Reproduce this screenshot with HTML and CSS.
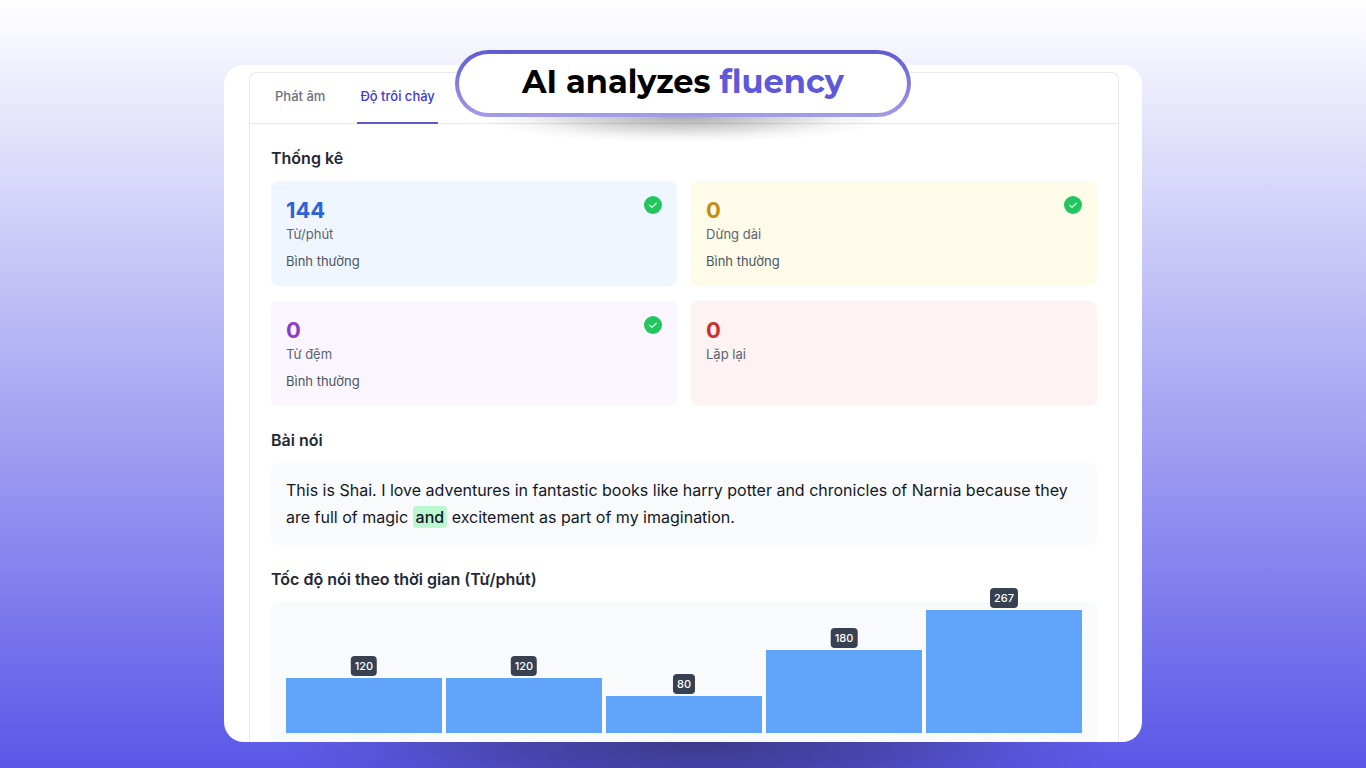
FILE: index.html
```html
<!DOCTYPE html>
<html lang="vi">
<head>
    <meta charset="UTF-8" />
    <meta name="viewport" content="width=device-width, initial-scale=1.0" />
    <title>AI analyzes fluency</title>
    <link rel="stylesheet" href="styles.css">
</head>
<body>
    <main class="card">
        <h1 class="badge">AI analyzes <span>fluency</span></h1>
        <div class="panel">
            <nav class="tabs">
                <button class="tab" type="button">Phát âm</button>
                <button class="tab tab--active" type="button">Độ trôi chảy</button>
            </nav>
            <div class="content">
                <section>
                    <h2>Thống kê</h2>
                    <div class="stats">
                        <div class="stat stat--blue">
                            <div>
                                <p class="stat-value">144</p>
                                <p class="stat-label">Từ/phút</p>
                                <p class="stat-status">Bình thường</p>
                            </div>
                            <svg class="check" viewBox="0 0 18 18"><circle cx="9" cy="9" r="9" /><path d="M5.8 9.3l2.2 2.1 4.3-4.2" /></svg>
                        </div>
                        <div class="stat stat--yellow">
                            <div>
                                <p class="stat-value">0</p>
                                <p class="stat-label">Dừng dài</p>
                                <p class="stat-status">Bình thường</p>
                            </div>
                            <svg class="check" viewBox="0 0 18 18"><circle cx="9" cy="9" r="9" /><path d="M5.8 9.3l2.2 2.1 4.3-4.2" /></svg>
                        </div>
                        <div class="stat stat--purple">
                            <div>
                                <p class="stat-value">0</p>
                                <p class="stat-label">Từ đệm</p>
                                <p class="stat-status">Bình thường</p>
                            </div>
                            <svg class="check" viewBox="0 0 18 18"><circle cx="9" cy="9" r="9" /><path d="M5.8 9.3l2.2 2.1 4.3-4.2" /></svg>
                        </div>
                        <div class="stat stat--red">
                            <div>
                                <p class="stat-value">0</p>
                                <p class="stat-label">Lặp lại</p>
                            </div>
                        </div>
                    </div>
                </section>
                <section>
                    <h2>Bài nói</h2>
                    <p class="speech">This is Shai. I love adventures in fantastic books like harry potter and chronicles of Narnia because they are full of magic <mark>and</mark> excitement as part of my imagination.</p>
                </section>
                <section>
                    <h2>Tốc độ nói theo thời gian (Từ/phút)</h2>
                    <div class="chart">
                        <div class="bar" style="height: 45%"><span>120</span></div>
                        <div class="bar" style="height: 45%"><span>120</span></div>
                        <div class="bar" style="height: 30%"><span>80</span></div>
                        <div class="bar" style="height: 67.4%"><span>180</span></div>
                        <div class="bar" style="height: 100%"><span>267</span></div>
                    </div>
                </section>
            </div>
        </div>
    </main>
</body>
</html>
```
FILE: styles.css
```css
* {
    box-sizing: border-box;
}
html, body {
    margin: 0;
    padding: 0;
}
body {
    min-height: 100vh;
    padding: 65px 24px 26px;
    overflow: hidden;
    background: linear-gradient(#ffffff, #5a57e8);
    font-family: 'Inter', sans-serif;
    color: #111827;
}
h2, p {
    margin: 0;
}
.card {
    position: relative;
    max-width: 918px;
    margin: 0 auto;
    padding: 7px 23px 0 25px;
    border-radius: 20px;
    background-color: #fff;
}
/* soft oval shadow under the card */
.card::after {
    content: "";
    position: absolute;
    top: 100%;
    left: 6%;
    right: 3%;
    height: 72px;
    background: radial-gradient(ellipse 50% 100% at 50% 0, rgba(30, 30, 60, 0.55), rgba(30, 30, 60, 0.34) 45%, rgba(30, 30, 60, 0.1) 78%, transparent);
}
.badge {
    position: absolute;
    z-index: 1;
    top: -15px;
    left: 50%;
    transform: translateX(-50%);
    width: 456px;
    max-width: 100%;
    margin: 0;
    padding-bottom: 3px;
    border: 4px solid transparent;
    border-radius: 34px;
    background: linear-gradient(#fff, #fff) padding-box, linear-gradient(#5f5bd0, #a49de6) border-box;
    font-family: 'Montserrat', 'Inter', sans-serif;
    font-size: 32px;
    line-height: 56px;
    font-weight: 700;
    color: #000;
    text-align: center;
    white-space: nowrap;
}
.badge span {
    color: #5d59d8;
}
.badge::after {
    content: "";
    position: absolute;
    top: 63px;
    left: 16px;
    right: 16px;
    height: 26px;
    background: radial-gradient(ellipse 50% 100% at 50% 0, rgba(0, 0, 0, 0.32), rgba(0, 0, 0, 0.16) 45%, rgba(0, 0, 0, 0.04) 78%, transparent);
}
.panel {
    border: 1px solid #e9eaee;
    border-bottom: none;
    border-radius: 7px 7px 0 0;
}
.tabs {
    display: flex;
    gap: 28px;
    padding: 0 21px;
    border-bottom: 1px solid #e5e7eb;
}
.tab {
    margin-bottom: -1px;
    padding: 13px 4px 16px;
    border: none;
    border-bottom: 2px solid transparent;
    background: none;
    font-family: inherit;
    font-size: 13px;
    line-height: 20px;
    font-weight: 500;
    color: #6b7280;
    cursor: pointer;
}
.tab--active {
    padding-left: 3px;
    padding-right: 3px;
    color: #4338ca;
    border-color: #5f5ac6;
}
.content {
    display: flex;
    flex-direction: column;
    gap: 22px;
    padding: 22px 21px 0;
}
h2 {
    margin-bottom: 11px;
    font-size: 16px;
    line-height: 24px;
    font-weight: 600;
    color: #1f2937;
}
.stats {
    display: grid;
    grid-template-columns: 1fr 1fr;
    gap: 15px 14px;
}
.stat {
    display: flex;
    justify-content: space-between;
    align-items: flex-start;
    min-height: 105px;
    padding: 14px 15px;
    border-radius: 7px;
}
.stat--blue {
    background-color: #eff6ff;
    color: #2f63d6;
}
.stat--yellow {
    background-color: #fefce8;
    color: #c38d16;
}
.stat--purple {
    background-color: #faf5ff;
    color: #8b3cc8;
}
.stat--red {
    background-color: #fef2f2;
    color: #c9302f;
}
.stat-value {
    font-size: 22px;
    line-height: 30px;
    font-weight: 700;
}
.stat-label,
.stat-status {
    font-size: 13px;
    line-height: 19px;
    color: #5b6472;
}
.stat-status {
    margin-top: 8px;
    color: #4b5563;
}
.check {
    width: 18px;
    height: 20px;
}
.check circle {
    fill: #22c55e;
}
.check path {
    fill: none;
    stroke: #d5ffe3;
    stroke-width: 1.3;
    stroke-linecap: round;
    stroke-linejoin: round;
}
.speech {
    padding: 14px 15px;
    border-radius: 7px;
    background-color: #f9fafb;
    font-size: 16px;
    line-height: 27px;
}
mark {
    padding: 1px 3px;
    border-radius: 4px;
    background-color: #bbf7d0;
    font-weight: 500;
    color: inherit;
}
.chart {
    display: flex;
    align-items: flex-end;
    gap: 4px;
    height: 140px;
    padding: 8px 15px 9px;
    border-radius: 7px 7px 0 0;
    background-color: #f9fafb;
}
.bar {
    position: relative;
    flex: 1;
    background-color: #60a5fa;
}
.bar span {
    position: absolute;
    bottom: calc(100% + 2px);
    left: 50%;
    transform: translateX(-50%);
    padding: 0 4px;
    border-radius: 4px;
    background-color: #374151;
    font-size: 11px;
    line-height: 20px;
    font-weight: 500;
    color: #fff;
}
@media screen and (max-width: 600px) {
    .stats {
        grid-template-columns: 1fr;
    }
    .badge {
        font-size: 24px;
    }
}
```
